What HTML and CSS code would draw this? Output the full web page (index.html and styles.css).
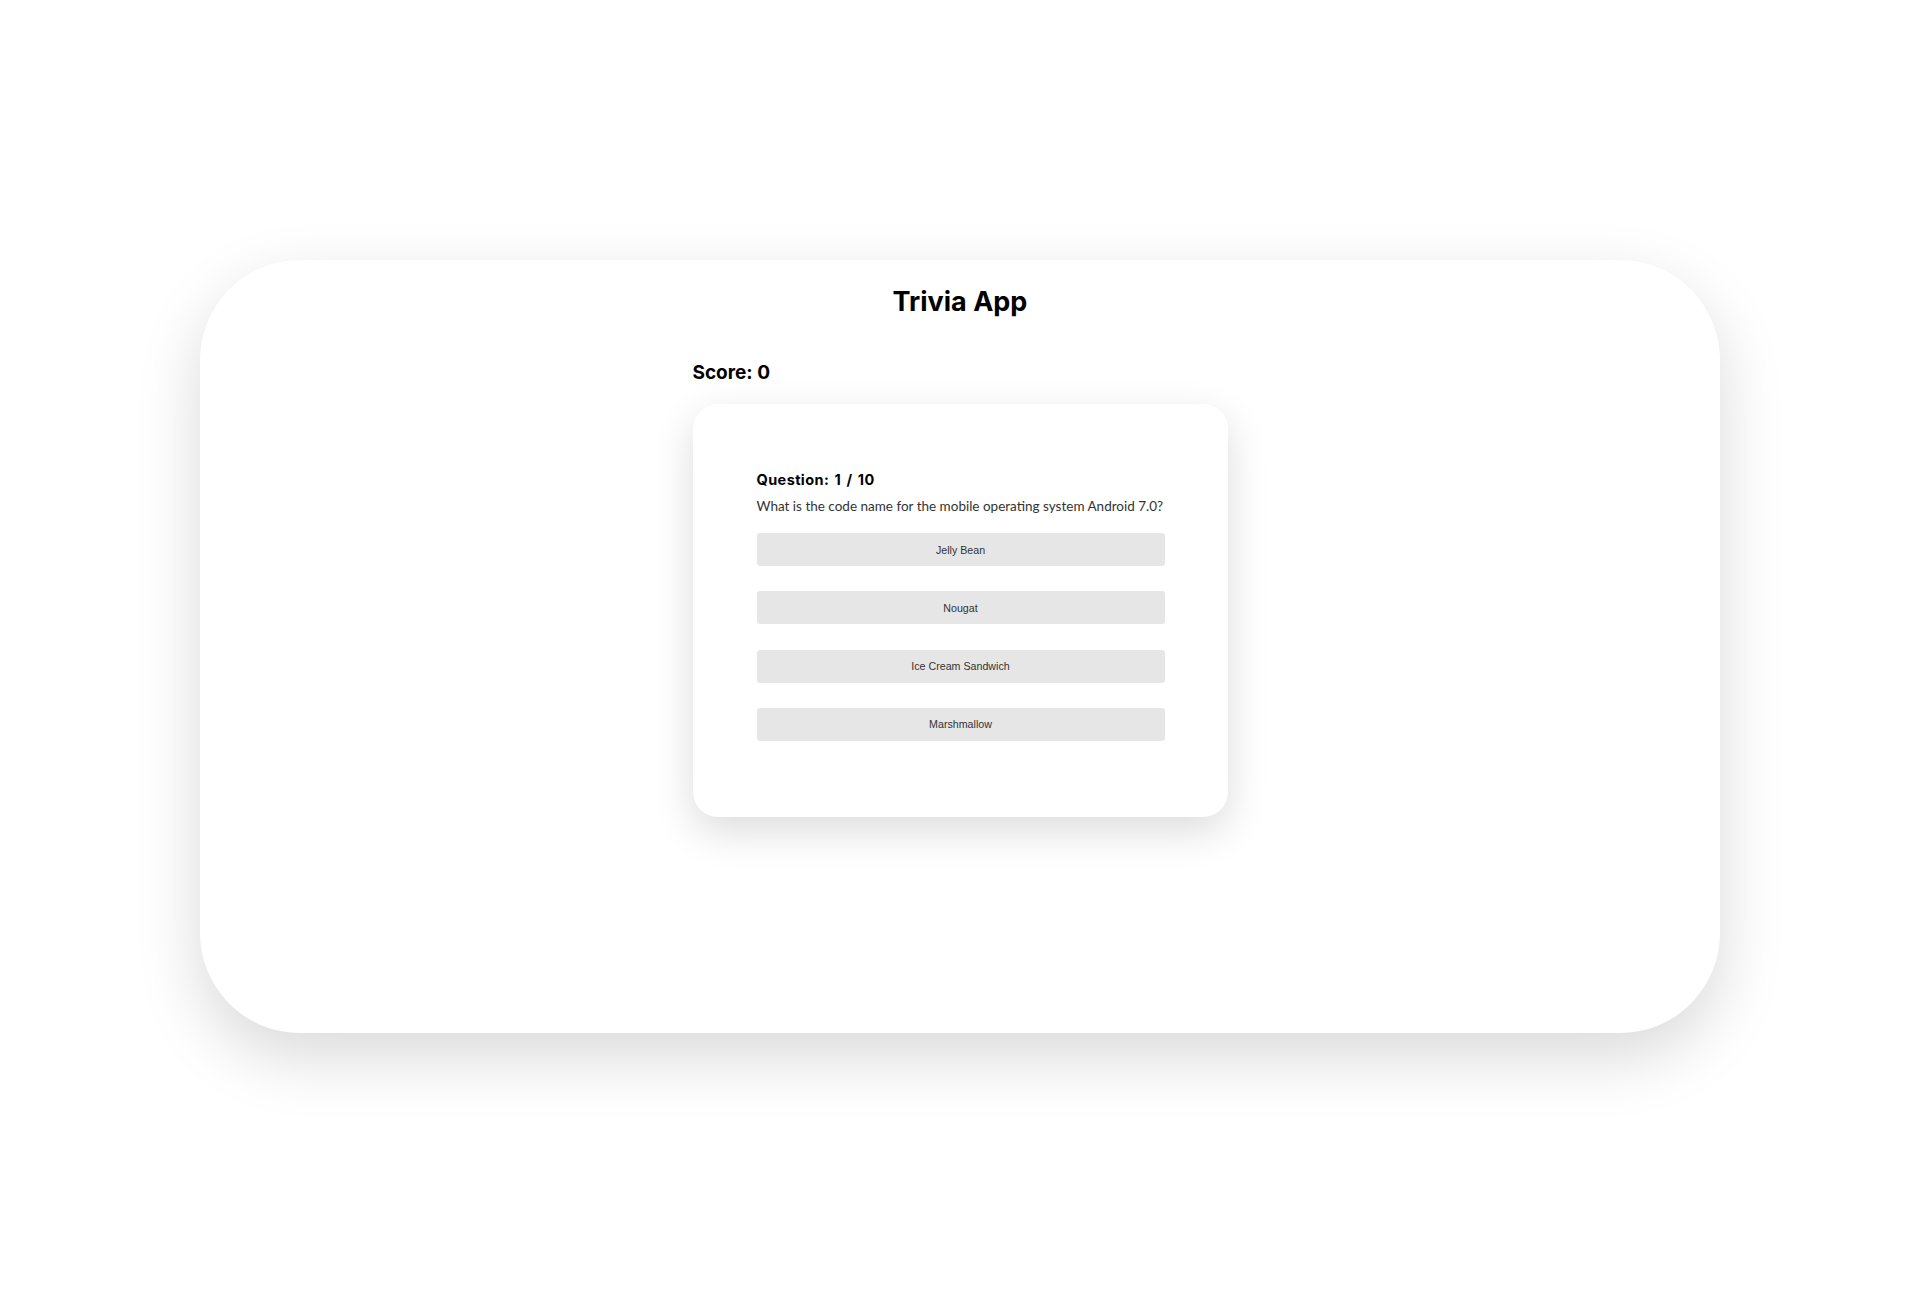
FILE: index.html
```html
<!DOCTYPE html>
<html lang="en">
<head>
<meta charset="utf-8">
<title>Trivia App</title>
<link rel="stylesheet" href="styles.css">
</head>
<body>
  <div class="page">
    <main class="app">
      <h1 class="app-title">Trivia App</h1>
      <section class="quiz">
        <div class="score">Score: 0</div>
        <div class="question-card">
          <div class="question-count">Question: 1 / 10</div>
          <p class="question-text">What is the code name for the mobile operating system Android 7.0?</p>
          <div class="answers">
            <button class="answer">Jelly Bean</button>
            <button class="answer">Nougat</button>
            <button class="answer">Ice Cream Sandwich</button>
            <button class="answer">Marshmallow</button>
          </div>
        </div>
      </section>
    </main>
  </div>
</body>
</html>
```
FILE: styles.css
```css
html, body {
  margin: 0;
  padding: 0;
  background: #ffffff;
}

.page {
  padding-top: 260px;
  height: 1034px;
}

.app {
  width: 1520px;
  height: 773px;
  margin: 0 auto;
  background: #ffffff;
  border-radius: 100px;
  box-shadow: 0 24px 64px rgba(0, 0, 0, 0.15);
  box-sizing: border-box;
  padding-top: 25px;
  font-family: Inter, Lato, sans-serif;
}

.app-title {
  margin: 0;
  text-align: center;
  font-size: 27px;
  line-height: 33px;
  font-weight: 700;
  color: #000;
}

.quiz {
  width: 535px;
  margin: 0 auto;
  padding-top: 43px;
}

.score {
  font-size: 19px;
  line-height: 24px;
  font-weight: 700;
  color: #000;
  margin-bottom: 19px;
}

.question-card {
  background: #fff;
  border-radius: 25px;
  box-shadow: 0 14px 40px rgba(0, 0, 0, 0.14);
  box-sizing: border-box;
  height: 413px;
  padding: 67px 63px 0 64px;
}

.question-count {
  font-size: 14.5px;
  line-height: 18px;
  font-weight: 700;
  letter-spacing: 0.4px;
  word-spacing: 1.5px;
  color: #000;
}

.question-text {
  margin: 8px 0 0;
  font-family: Lato, sans-serif;
  font-size: 13.5px;
  line-height: 18px;
  color: #333;
  white-space: nowrap;
}

.answers {
  display: flex;
  flex-direction: column;
  gap: 25.3px;
  margin-top: 18px;
}

.answer {
  height: 33px;
  border: none;
  border-radius: 3px;
  background: #e6e6e6;
  color: #333;
  font-family: "Liberation Sans", Arial, sans-serif;
  font-size: 10.67px;
  padding: 0;
}
```
